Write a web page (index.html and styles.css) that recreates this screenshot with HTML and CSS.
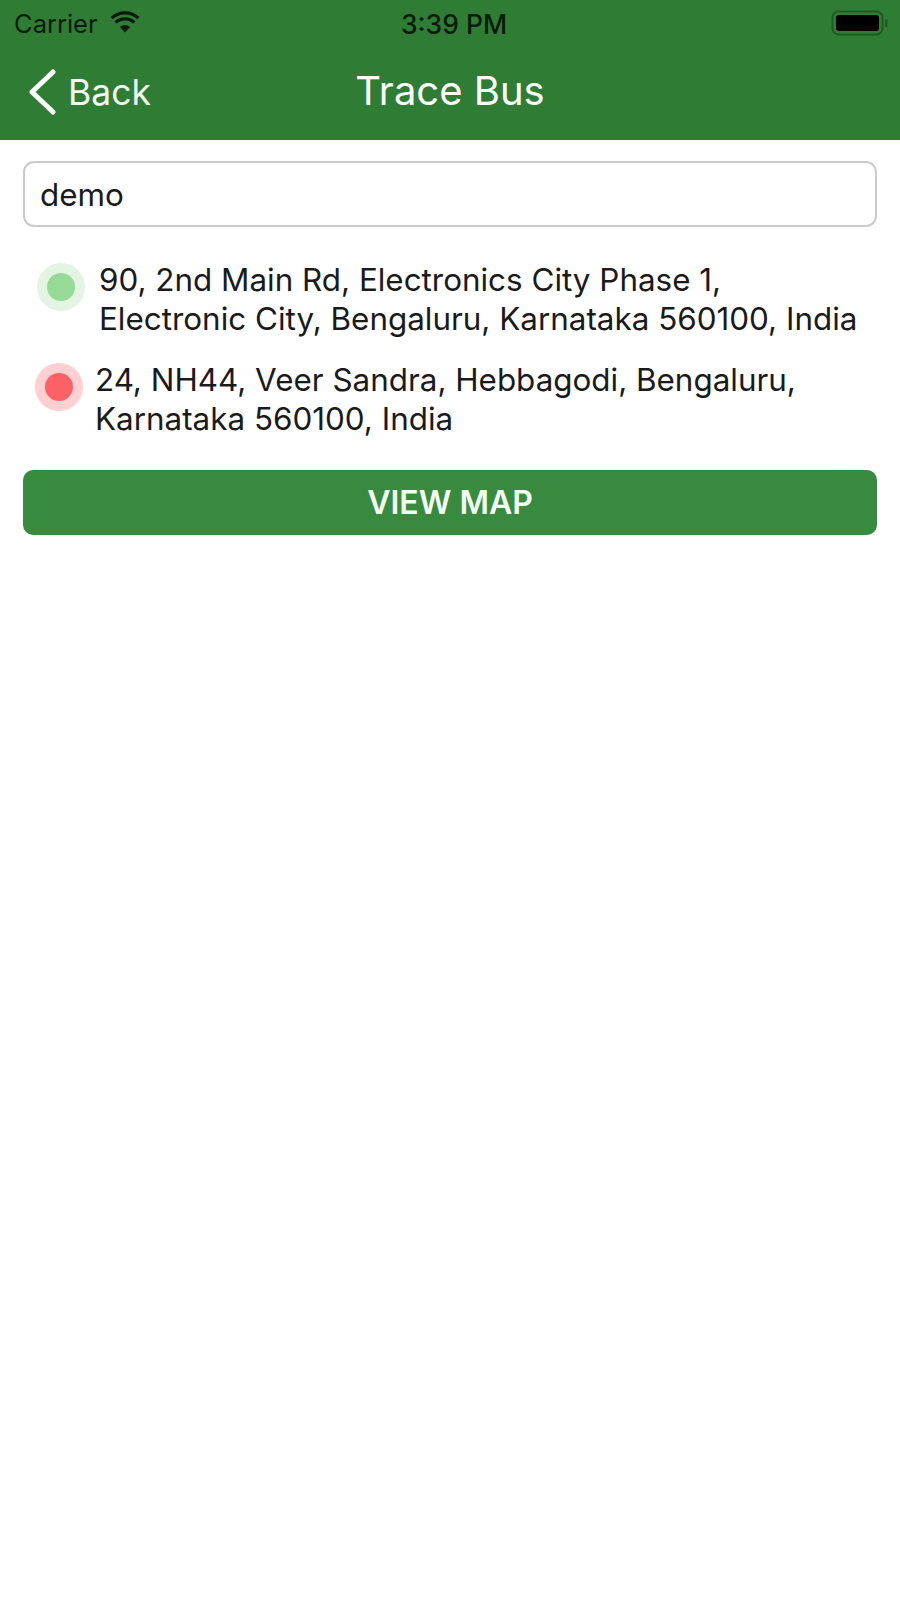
FILE: index.html
```html
<!DOCTYPE html>
<html lang="en">
<head>
<meta charset="utf-8">
<title>Trace Bus</title>
<link rel="stylesheet" href="styles.css">
</head>
<body>
<header class="header">
  <div class="status">
    <div class="status-left">
      <span>Carrier</span>
      <svg class="wifi" width="30" height="22" viewBox="0 0 30 22"><path d="M15 21.5 9.9 15.9a7.6 7.6 0 0 1 10.2 0Z" fill="#0a1a0b"/><path d="M5.6 11.6a13.6 13.6 0 0 1 18.8 0" fill="none" stroke="#0a1a0b" stroke-width="3.2"/><path d="M1.6 7.2a19.6 19.6 0 0 1 26.8 0" fill="none" stroke="#0a1a0b" stroke-width="3.2"/></svg>
    </div>
    <span class="time">3:39 PM</span>
    <svg class="battery" width="58" height="26" viewBox="0 0 58 26"><rect x="1.5" y="1.5" width="50" height="23" rx="6" fill="none" stroke="#1f5c23" stroke-width="2"/><rect x="5" y="5" width="43" height="16" rx="3" fill="#000"/><rect x="54" y="9" width="2.5" height="8" rx="1" fill="#1f5c23"/></svg>
  </div>
  <nav class="nav">
    <div class="back">
      <svg class="chevron" width="28" height="46" viewBox="0 0 28 46"><path d="M25 3 4 23l21 20" fill="none" stroke="#fff" stroke-width="5" stroke-linecap="round" stroke-linejoin="round"/></svg>
      <span>Back</span>
    </div>
    <h1 class="title">Trace Bus</h1>
  </nav>
</header>
<main class="content">
  <div class="field">demo</div>
  <div class="stops">
    <div class="stop stop-a">
      <span class="dot dot-green"></span>
      <p class="address">90, 2nd Main Rd, Electronics City Phase 1,<br>Electronic City, Bengaluru, Karnataka 560100, India</p>
    </div>
    <div class="stop stop-b">
      <span class="dot dot-red"></span>
      <p class="address">24, NH44, Veer Sandra, Hebbagodi, Bengaluru,<br>Karnataka 560100, India</p>
    </div>
  </div>
  <button class="map-btn">VIEW MAP</button>
</main>
</body>
</html>
```
FILE: styles.css
```css
* { box-sizing: border-box; }
html, body { margin: 0; padding: 0; }
body {
  width: 900px;
  height: 1598px;
  background: #fff;
  font-family: Inter, "Liberation Sans", sans-serif;
  color: #1a1a1a;
  overflow: hidden;
}
.header {
  height: 140px;
  background: #2f7d34;
  display: flex;
  flex-direction: column;
}
.status {
  height: 47px;
  padding: 0 14px;
  display: flex;
  align-items: center;
  justify-content: space-between;
  position: relative;
  color: #0a1a0b;
  font-size: 25.5px;
}
.status-left { display: flex; align-items: center; gap: 12px; }
.wifi { margin-top: -3px; }
.time {
  position: absolute;
  left: 8px;
  right: 0;
  text-align: center;
  font-weight: 500;
  font-size: 26.5px;
}
.battery { margin-right: -3px; margin-top: -2px; }
.nav {
  position: relative;
  flex: 1;
  display: flex;
  align-items: center;
  justify-content: center;
}
.back {
  position: absolute;
  left: 28px;
  top: 22px;
  display: flex;
  align-items: center;
  gap: 12px;
  color: #f2f8f2;
  font-size: 35.5px;
}
.title {
  margin: -7px 0 0;
  font-size: 40px;
  font-weight: 400;
  color: #fff;
}
.content { padding: 21px 23px 0; }
.field {
  height: 66px;
  border: 2px solid #cbcbcb;
  border-radius: 11px;
  padding: 2px 15px 0;
  display: flex;
  align-items: center;
  font-size: 31.4px;
}
.stops { margin-top: 34px; }
.stop { display: flex; align-items: flex-start; }
.stop-a { padding-left: 14px; gap: 14px; }
.stop-b { padding-left: 12px; gap: 12px; margin-top: 23px; }
.address {
  margin: 0;
  font-size: 31.4px;
  line-height: 38.5px;
  white-space: nowrap;
}
.dot {
  flex: none;
  width: 48px;
  height: 48px;
  border-radius: 50%;
  margin-top: 2px;
  display: flex;
  align-items: center;
  justify-content: center;
}
.dot::after {
  content: "";
  width: 28px;
  height: 28px;
  border-radius: 50%;
}
.dot-green { background: #e3f4e2; }
.dot-green::after { background: #96da97; }
.dot-red { background: #ffcfd1; }
.dot-red::after { background: #fb6165; }
.map-btn {
  display: block;
  width: 854px;
  height: 65px;
  margin-top: 32px;
  border: 0;
  border-radius: 10px;
  background: #388a3e;
  color: #f4faf4;
  font-family: inherit;
  font-size: 32px;
  font-weight: 600;
}
```
